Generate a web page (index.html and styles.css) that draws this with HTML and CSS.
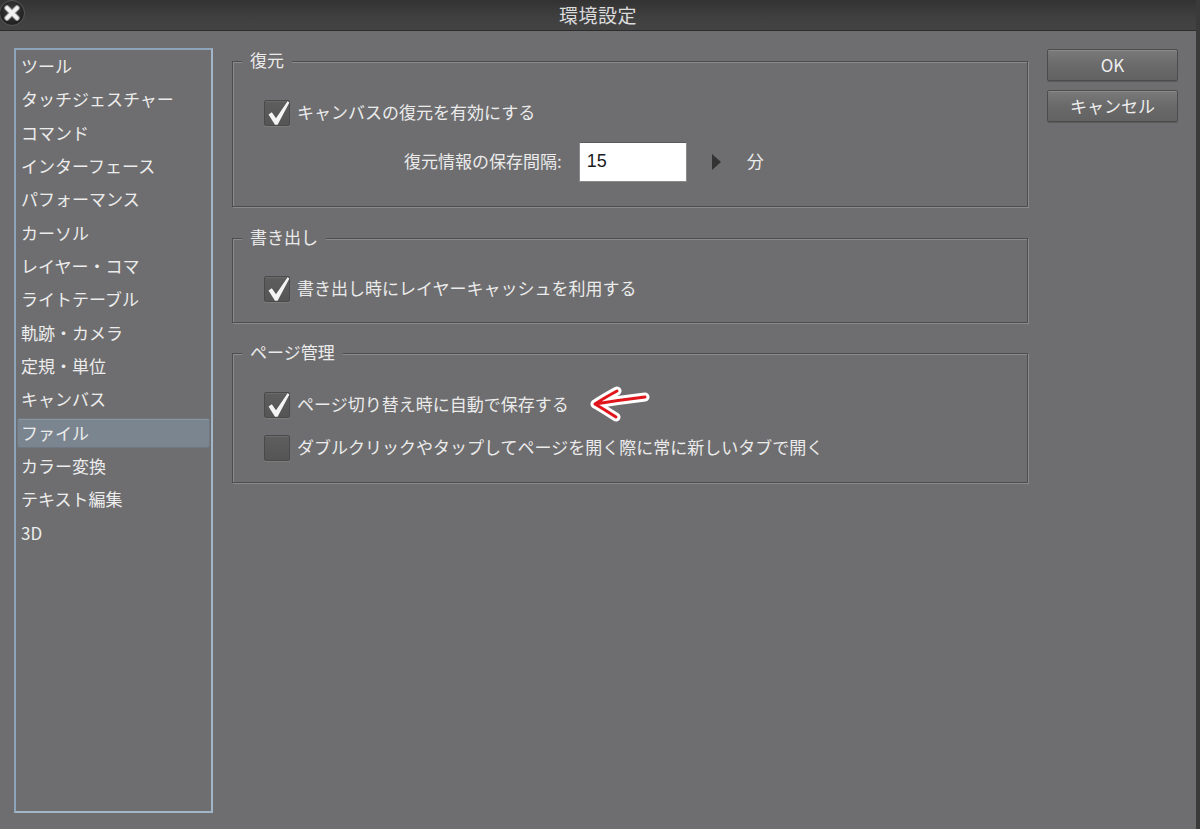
FILE: index.html
```html
<!DOCTYPE html>
<html lang="ja">
<head>
<meta charset="utf-8">
<title>環境設定</title>
<link rel="stylesheet" href="styles.css">
</head>
<body>
<div class="window">
  <div class="titlebar">
    <div class="tb-left">
      <svg class="close" width="28" height="28" viewBox="0 0 28 28">
        <defs>
          <radialGradient id="cg" cx="50%" cy="40%" r="60%">
            <stop offset="0" stop-color="#3c3c3c"/>
            <stop offset="1" stop-color="#1e1e1e"/>
          </radialGradient>
        </defs>
        <circle cx="13" cy="13" r="12.5" fill="url(#cg)" stroke="#5a5a5a" stroke-width="1"/>
        <path d="M8 8 L18 18 M18 8 L8 18" stroke="#9a9a9a" stroke-width="5.5" stroke-linecap="round"/>
        <path d="M8 8 L18 18 M18 8 L8 18" stroke="#f2f2f2" stroke-width="3.6" stroke-linecap="round"/>
      </svg>
    </div>
    <div class="title">環境設定</div>
    <div class="tb-right"></div>
  </div>
  <div class="main">
    <ul class="sidebar">
      <li class="item">ツール</li>
      <li class="item">タッチジェスチャー</li>
      <li class="item">コマンド</li>
      <li class="item">インターフェース</li>
      <li class="item">パフォーマンス</li>
      <li class="item">カーソル</li>
      <li class="item">レイヤー・コマ</li>
      <li class="item">ライトテーブル</li>
      <li class="item">軌跡・カメラ</li>
      <li class="item">定規・単位</li>
      <li class="item">キャンバス</li>
      <li class="item selected">ファイル</li>
      <li class="item">カラー変換</li>
      <li class="item">テキスト編集</li>
      <li class="item">3D</li>
    </ul>

    <div class="content">
      <section class="group g-restore">
        <div class="group-title">復元</div>
        <div class="row">
          <span class="checkbox checked">
            <svg width="26" height="26" viewBox="0 0 26 26"><polygon points="3.5,14.5 6.8,12.2 11,18.2 22.6,1.2 24.4,2.4 12.6,24.8 10,24.8" fill="#f4f4f4"/></svg>
          </span>
          <span class="label">キャンバスの復元を有効にする</span>
        </div>
        <div class="row interval">
          <span class="label">復元情報の保存間隔:</span>
          <span class="input">15</span>
          <span class="arrow-right"></span>
          <span class="label unit">分</span>
        </div>
      </section>

      <section class="group g-export">
        <div class="group-title">書き出し</div>
        <div class="row">
          <span class="checkbox checked">
            <svg width="26" height="26" viewBox="0 0 26 26"><polygon points="3.5,14.5 6.8,12.2 11,18.2 22.6,1.2 24.4,2.4 12.6,24.8 10,24.8" fill="#f4f4f4"/></svg>
          </span>
          <span class="label">書き出し時にレイヤーキャッシュを利用する</span>
        </div>
      </section>

      <section class="group g-page">
        <div class="group-title">ページ管理</div>
        <div class="row">
          <span class="checkbox checked">
            <svg width="26" height="26" viewBox="0 0 26 26"><polygon points="3.5,14.5 6.8,12.2 11,18.2 22.6,1.2 24.4,2.4 12.6,24.8 10,24.8" fill="#f4f4f4"/></svg>
          </span>
          <span class="label">ページ切り替え時に自動で保存する</span>
          <svg class="annot" width="64" height="38" viewBox="0 0 64 38">
            <path d="M57 12 Q32 15 7 19 M29 6 Q16 13 7 19 Q17 25 28 32" fill="none" stroke="#ffffff" stroke-width="9" stroke-linecap="round" stroke-linejoin="round"/>
            <path d="M57 12 Q32 15 7 19 M29 6 Q16 13 7 19 Q17 25 28 32" fill="none" stroke="#e0161c" stroke-width="3" stroke-linecap="round" stroke-linejoin="round"/>
          </svg>
        </div>
        <div class="row second">
          <span class="checkbox"></span>
          <span class="label">ダブルクリックやタップしてページを開く際に常に新しいタブで開く</span>
        </div>
      </section>
    </div>

    <div class="buttons">
      <div class="btn">OK</div>
      <div class="btn">キャンセル</div>
    </div>
  </div>
</div>
</body>
</html>
```

FILE: styles.css
```css
html, body {
  margin: 0;
  padding: 0;
  width: 1200px;
  height: 829px;
  overflow: hidden;
  background: #6e6e70;
  font-family: "Noto Sans CJK JP", "Noto Sans", sans-serif;
  color: #ebebeb;
}

.window {
  width: 1196px;
  height: 829px;
  border-right: 4px solid #3a3a3b;
  background: #6e6e70;
}

.titlebar {
  height: 30px;
  display: grid;
  grid-template-columns: 1fr auto 1fr;
  align-items: center;
  background: linear-gradient(#333334, #404041 60%, #434344);
  border-bottom: 1px solid #2c2c2c;
  overflow: hidden;
}

.tb-left {
  display: flex;
  align-items: flex-start;
  height: 30px;
}

.close {
  display: block;
  margin: 0 0 0 -1px;
}

.title {
  font-size: 19px;
  line-height: 30px;
  color: #dcdcdc;
  letter-spacing: 0.5px;
}

.main {
  display: flex;
  align-items: flex-start;
  padding: 17px 0 0 14px;
}

/* sidebar */
.sidebar {
  list-style: none;
  margin: 0;
  padding: 2px 0 0;
  width: 195px;
  height: 759px;
  box-sizing: content-box;
  border: 2px solid #a3b6c8;
  border-left-color: #8ea4b8;
  border-top-color: #8ea4b8;
  flex: none;
  display: flex;
  flex-direction: column;
  gap: 5.33px;
}

.item {
  height: 28px;
  flex: none;
  margin: 0 2px;
  padding-left: 3px;
  font-size: 17px;
  line-height: 27px;
  color: #ececec;
  white-space: nowrap;
}

.item.selected {
  background: #7b8590;
  border-radius: 2px;
  box-shadow: inset 0 1px 0 #8a949e, 0 0 0 1px #6f7882;
}

/* content */
.content {
  margin: 13px 0 0 19px;
  width: 796px;
  flex: none;
}

.group {
  position: relative;
  border: 1px solid #4d4d4e;
  box-shadow: inset 1px 1px 0 #8b8b8c, 1px 1px 0 #8b8b8c;
  box-sizing: border-box;
}

.group-title {
  position: absolute;
  top: -14px;
  left: 9px;
  padding: 0 8px 0 8px;
  font-size: 17px;
  line-height: 24px;
  background: #6e6e70;
  color: #ebebeb;
}

.g-restore {
  height: 146px;
  padding: 38px 0 0 31px;
}

.g-export {
  margin-top: 31px;
  height: 85px;
  padding: 37px 0 0 31px;
}

.g-page {
  margin-top: 30px;
  height: 130px;
  padding: 38px 0 0 31px;
}

.row {
  display: flex;
  align-items: center;
  height: 26px;
}

.row.second {
  margin-top: 17px;
}

.label {
  font-size: 17px;
  line-height: 26px;
  padding-bottom: 3px;
  color: #ebebeb;
  white-space: nowrap;
}

.checkbox {
  width: 24px;
  height: 24px;
  flex: none;
  margin-right: 7px;
  border: 1px solid #4a4a4a;
  border-radius: 2px;
  background: linear-gradient(#5e5e5f, #555556);
  box-shadow: inset 0 1px 0 #6a6a6b, 0 1px 0 #7c7c7d;
  position: relative;
}

.checkbox svg {
  display: block;
  margin: -1px 0 0 0;
}

.row.interval {
  height: 40px;
  margin-top: 16px;
  padding-left: 140px;
}

.input {
  width: 99px;
  height: 38px;
  margin-left: 17px;
  padding-left: 7px;
  background: #ffffff;
  border: 1px solid #8a8a8a;
  border-top-color: #5a5a5a;
  font-size: 18px;
  line-height: 37px;
  color: #1c1c1c;
  font-family: "Liberation Sans", "Noto Sans", sans-serif;
  box-sizing: content-box;
}

.arrow-right {
  width: 0;
  height: 0;
  margin-left: 25px;
  border-top: 8px solid transparent;
  border-bottom: 8px solid transparent;
  border-left: 9px solid #333334;
}

.unit {
  margin-left: 26px;
}

.annot {
  display: block;
  margin-left: 19px;
  margin-top: -2px;
  flex: none;
}

/* buttons */
.buttons {
  margin: 1px 0 0 19px;
  display: flex;
  flex-direction: column;
  gap: 9px;
  width: 131px;
}

.btn {
  height: 30px;
  border: 1px solid #4c4c4c;
  border-radius: 2px;
  background: linear-gradient(#7a7a7b, #6a6a6b 50%, #626263);
  box-shadow: inset 0 1px 0 #8a8a8b, 0 1px 0 #5a5a5a;
  font-size: 17px;
  line-height: 29px;
  text-align: center;
  color: #eeeeee;
}
```
